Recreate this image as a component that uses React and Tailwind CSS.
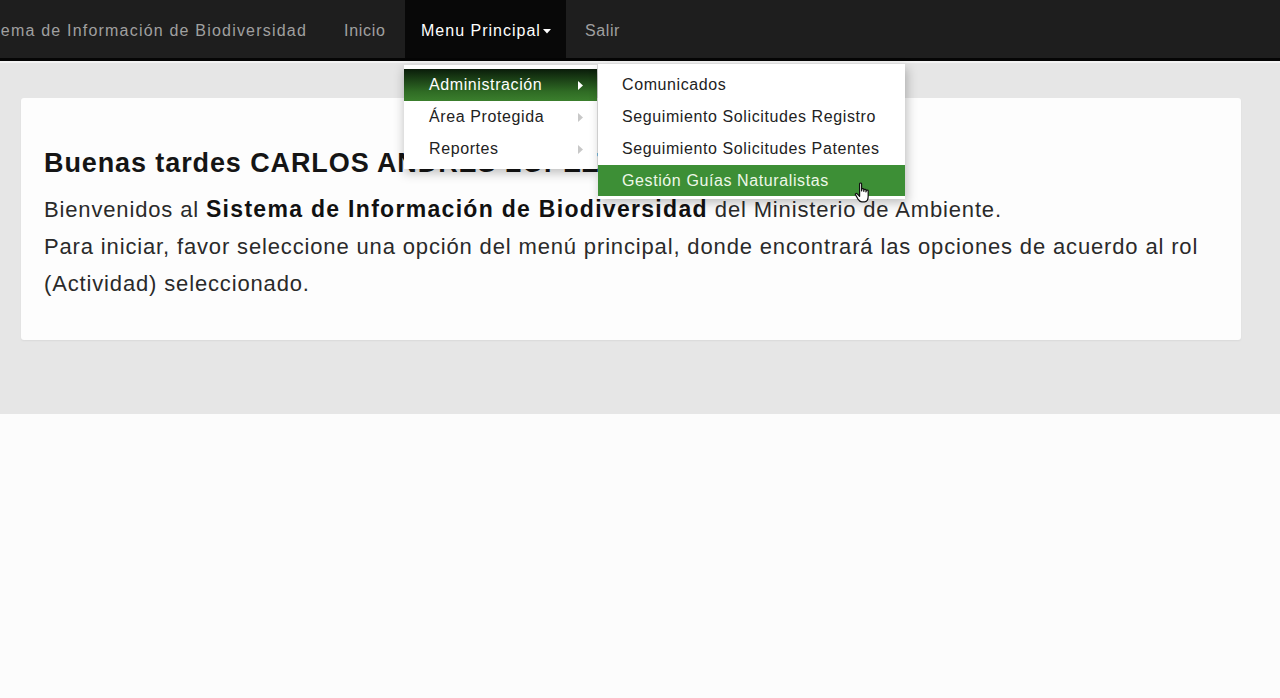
import React from "react";

function Caret({ light }) {
  return (
    <svg width="7" height="11" viewBox="0 0 7 11" className="ml-auto">
      <path d="M1 1 L6 5.5 L1 10 Z" fill={light ? "#ffffff" : "#c8c8c8"} />
    </svg>
  );
}

function HandCursor() {
  return (
    <svg width="20" height="22" viewBox="0 0 18 20" className="absolute left-[854px] top-[182px] z-20">
      <path
        d="M5 1.5 C5 0.7 6.8 0.7 6.8 1.5 L6.8 8 L7 6.5 C7 5.7 8.8 5.7 8.8 6.5 L8.8 8.5 L9 7.2 C9 6.4 10.8 6.4 10.8 7.2 L10.8 9 L11 8 C11 7.2 12.8 7.2 12.8 8 L12.8 13 C12.8 16 11.5 18 9.5 18 L7 18 C5.5 18 4.5 17 3.5 15.5 L1.2 11.5 C0.8 10.8 1.8 10 2.6 10.6 L5 13 Z"
        fill="#ffffff"
        stroke="#111111"
        strokeWidth="1.1"
        strokeLinejoin="round"
      />
    </svg>
  );
}

export default function App() {
  const font = { fontFamily: '"Liberation Sans", Arial, Helvetica, sans-serif' };
  return (
    <div className="min-h-[698px] w-[1280px] overflow-hidden bg-[#fcfcfc] relative" style={font}>
      {/* Navbar */}
      <nav className="h-[61px] bg-[#1e1e1e] border-b-[3px] border-[#050505] flex items-stretch text-[16px] tracking-[1.2px]">
        <div className="w-[344px] overflow-hidden flex items-center justify-end pr-[37px] pt-[3px] text-[#a0a0a0] whitespace-nowrap">
          Sistema de Información de Biodiversidad
        </div>
        <div className="w-[61px] flex items-center pt-[3px] text-[#a0a0a0] tracking-[0.7px]">Inicio</div>
        <div className="relative">
          <div className="h-full w-[161px] bg-[#080808] flex items-center pl-[16px] pt-[3px] text-white whitespace-nowrap tracking-[1px]">
            Menu Principal
            <svg width="8" height="5" viewBox="0 0 8 5" className="ml-[2px] mt-[2px]">
              <path d="M0 0 L8 0 L4 4.5 Z" fill="#ffffff" />
            </svg>
          </div>
          {/* Dropdown */}
          <div className="absolute left-[-1px] top-[65px] w-[193px] bg-white py-[4px] shadow-[0_4px_10px_rgba(0,0,0,0.25)] text-[16px] tracking-[0.6px] text-[#222] z-10">
            <div className="h-[32px] flex items-center pl-[25px] pr-[13px] bg-[linear-gradient(to_bottom,#0a1c0a,#2f6b24_70%,#3b7f2d)] text-white">
              Administración
              <Caret light />
            </div>
            <div className="h-[32px] flex items-center pl-[25px] pr-[13px]">
              Área Protegida
              <Caret />
            </div>
            <div className="h-[32px] flex items-center pl-[25px] pr-[13px]">
              Reportes
              <Caret />
            </div>
          </div>
          {/* Submenu */}
          <div className="absolute left-[193px] top-[64px] w-[307px] bg-white pt-[5px] pb-[3px] shadow-[2px_4px_10px_rgba(0,0,0,0.25)] text-[16px] tracking-[0.6px] text-[#222] z-10 whitespace-nowrap">
            <div className="h-[32px] flex items-center pl-[24px]">Comunicados</div>
            <div className="h-[32px] flex items-center pl-[24px]">Seguimiento Solicitudes Registro</div>
            <div className="h-[32px] flex items-center pl-[24px]">Seguimiento Solicitudes Patentes</div>
            <div className="h-[31px] flex items-center pl-[24px] bg-[#3d8f36] text-[#eef8e8]">Gestión Guías Naturalistas</div>
          </div>
        </div>
        <div className="flex items-center pl-[19px] pt-[3px] text-[#a0a0a0] tracking-[0.6px]">Salir</div>
      </nav>

      {/* Gray area */}
      <div className="h-[353px] bg-[#e6e6e6] border-t-[2px] border-[#f3f3f3] px-[21px] pt-[35px]">
        <div className="w-[1220px] h-[242px] bg-[#fdfdfd] rounded-[3px] shadow-[0_1px_2px_rgba(0,0,0,0.06)] px-[23px] pt-[50px]">
          <h1 className="text-[27px] font-bold tracking-[0.9px] text-[#151515] leading-[30px] whitespace-nowrap">
            Buenas tardes CARLOS ANDRES LOPEZ
          </h1>
          <p className="mt-[13px] text-[22px] tracking-[0.85px] leading-[37px] text-[#2a2a2a]">
            Bienvenidos al <b className="text-[23px] text-[#111] tracking-[1.3px]">Sistema de Información de Biodiversidad</b> del Ministerio de Ambiente.
            <br />
            Para iniciar, favor seleccione una opción del menú principal, donde encontrará las opciones de acuerdo al rol (Actividad) seleccionado.
          </p>
        </div>
      </div>

      <HandCursor />
    </div>
  );
}
